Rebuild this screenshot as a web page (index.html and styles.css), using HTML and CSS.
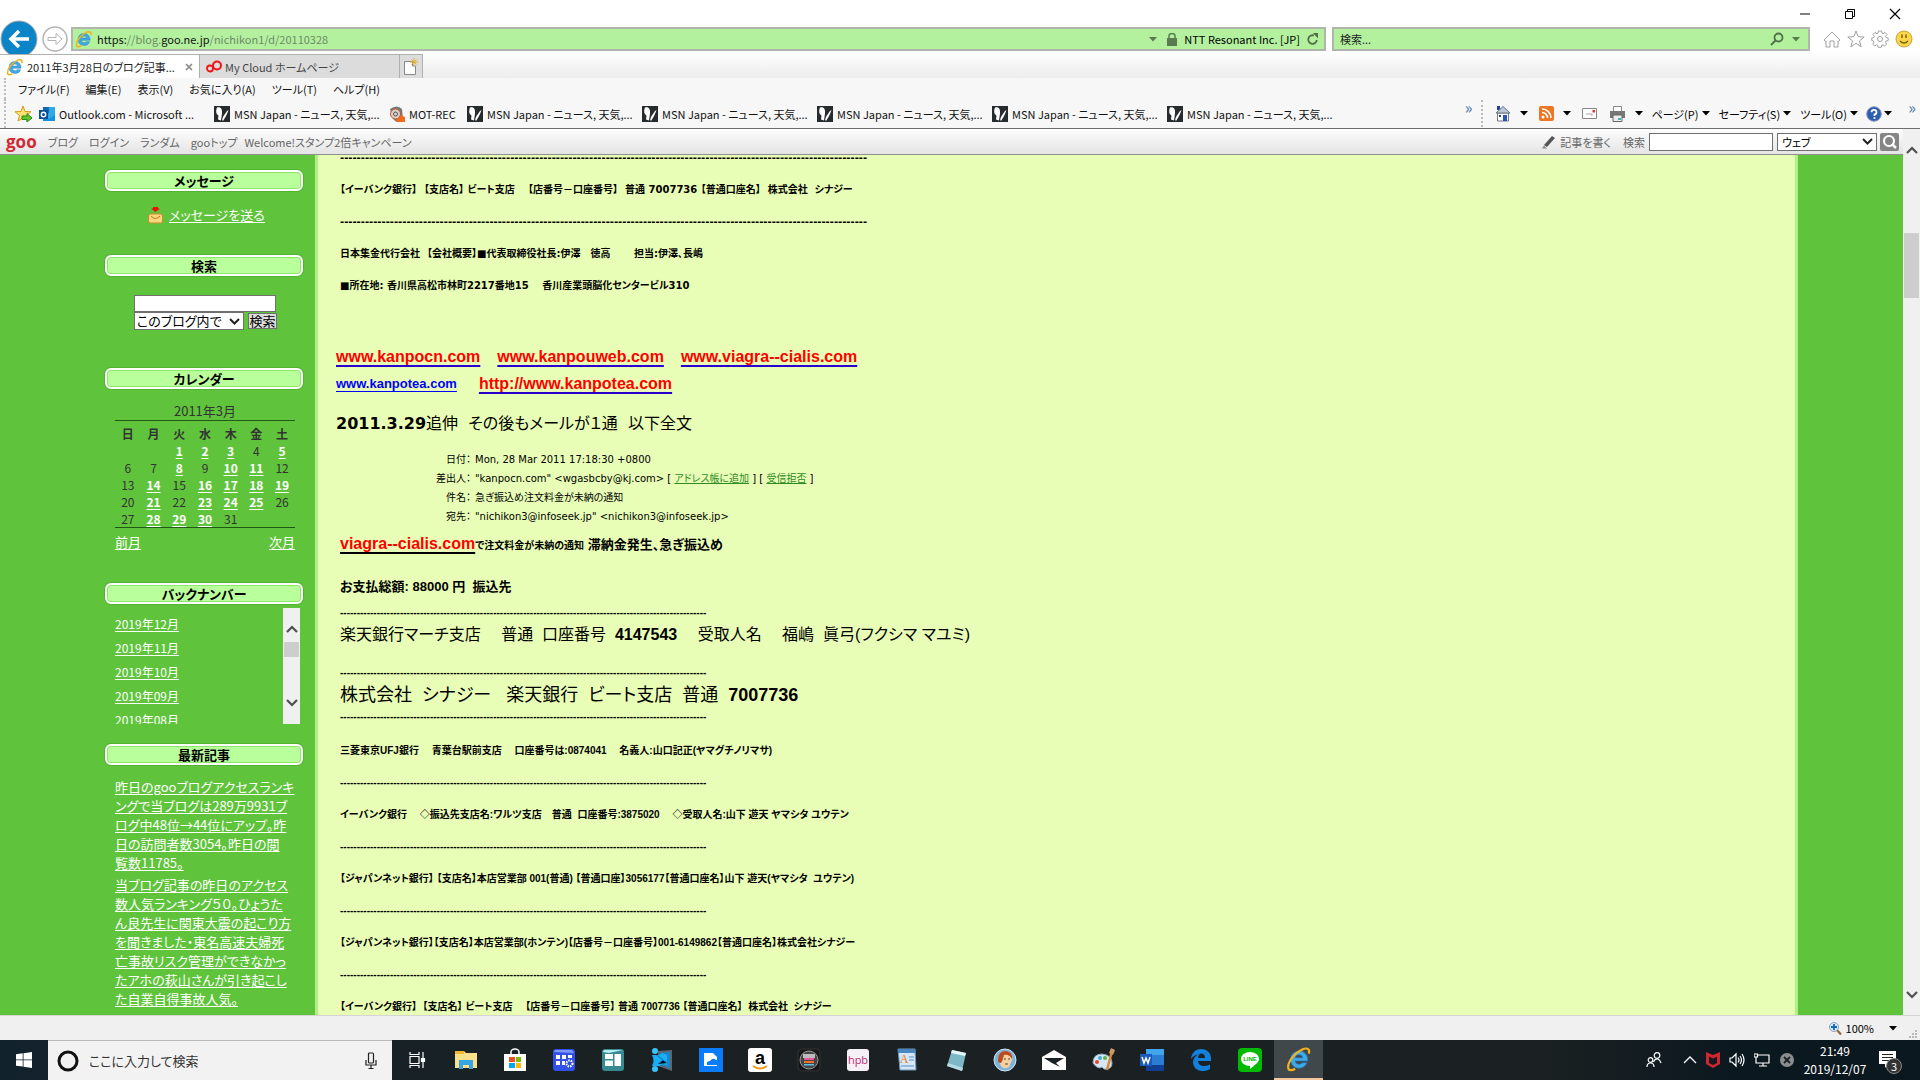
FILE: index.html
```html
<!DOCTYPE html>
<html lang="ja">
<head>
<meta charset="utf-8">
<title>2011年3月28日のブログ記事一覧</title>
<link rel="stylesheet" href="styles.css">
</head>
<body>
<svg width="0" height="0" class="defs" aria-hidden="true">
  <symbol id="ie" viewBox="0 0 24 24">
    <path d="M12 4.500a8 8 0 1 0 7.500 11h-4.700a3.600 3.600 0 0 1-6.400-1.700H20A8 8 0 0 0 12 4.500zM8.500 10.800a3.600 3.600 0 0 1 7 0z" fill="#3fa9e6" fill-rule="evenodd" stroke="#1b74ba" stroke-width=".5"/>
    <path d="M21 7c1.500-4.500-1.500-6-6.500-3.500C8 6.500 2 14 2 19.500c0 4 4 3 6.500 1.500" fill="none" stroke="#f2b21c" stroke-width="2"/>
  </symbol>
  <symbol id="msn" viewBox="0 0 16 16"><path d="M0 0h16v16H0z" fill="#262b2e"/><path d="M3 1.500c4-1 5.500 2 5 6l-1 7-3-1 .5-4C1.500 8 2 4 3 1.500zM14.500 4c-1 3-2 5-3 7l-2.500 4c-1.500-1-.5-3 .5-5l3.500-5z" fill="#fff"/></symbol>
  <symbol id="caret" viewBox="0 0 8 5"><path d="M0 0h8L4 4.500z" fill="currentColor"/></symbol>
  <symbol id="up" viewBox="0 0 12 8"><path d="M1 7l5-5 5 5" fill="none" stroke="#505050" stroke-width="2.200"/></symbol>
  <symbol id="down" viewBox="0 0 12 8"><path d="M1 1l5 5 5-5" fill="none" stroke="#505050" stroke-width="2.200"/></symbol>
</svg>

<header class="chrome">
  <div class="titlebar">
    <button class="win" aria-label="最小化"><svg width="12" height="12"><path d="M1 6h10" stroke="#000"/></svg></button>
    <button class="win" aria-label="元に戻す"><svg width="12" height="12" fill="none" stroke="#000"><path d="M1.500 3.500h7v7h-7zM3.500 3V1.500h7v7H9"/></svg></button>
    <button class="win" aria-label="閉じる"><svg width="12" height="12"><path d="M1 1l10 10M11 1L1 11" stroke="#000" stroke-width="1.200"/></svg></button>
  </div>
  <div class="navbar">
    <button class="back" aria-label="戻る"><svg width="38" height="38" viewBox="0 0 38 38"><circle cx="19" cy="19" r="18" fill="#0b84c8" stroke="#a9a9a9"/><path d="M29 19H12M19 11l-8 8 8 8" fill="none" stroke="#fff" stroke-width="3.500"/></svg></button>
    <button class="fwd" aria-label="進む"><svg width="28" height="28" viewBox="0 0 28 28" fill="#fff" stroke="#b4b4b4"><circle cx="14" cy="14" r="12" stroke-width="1.500"/><path d="M7 12.500h8V8.500l6 5.500-6 5.500v-4H7z"/></svg></button>
    <div class="address">
      <svg width="18" height="18"><use href="#ie"/></svg>
      <span class="url"><b>https:</b>//blog.<b>goo.ne.jp</b>/nichikon1/d/20110328</span>
      <svg class="dim" width="8" height="5"><use href="#caret"/></svg>
      <svg class="lock" width="10" height="13" viewBox="0 0 10 13"><path d="M0 5h10v8H0z" fill="#5a7a50"/><path d="M2 6V3a3 2.500 0 0 1 6 0v3" fill="none" stroke="#5a7a50" stroke-width="1.500"/></svg>
      <span>NTT Resonant Inc. [JP]</span>
      <svg class="reload" width="13" height="13" viewBox="0 0 13 13"><path d="M8 2.500A4.300 4.300 0 1 0 10.800 7" fill="none" stroke="#4f6d46" stroke-width="1.800"/><path d="M7 0h5v5.500z" fill="#4f6d46"/></svg>
    </div>
    <div class="websearch">
      <input type="text" aria-label="検索" placeholder="検索...">
      <svg width="14" height="14" viewBox="0 0 14 14" fill="none" stroke="#4f7146" stroke-width="1.800"><circle cx="8.500" cy="5.500" r="4"/><path d="M5.500 8.500L1 13"/></svg>
      <svg class="dim" width="8" height="5"><use href="#caret"/></svg>
    </div>
    <div class="tools">
      <svg width="18" height="18" viewBox="0 0 18 18" fill="none" stroke="#a0a0a0"><path d="M1 10l8-8 8 8-1.500 1.500L15 11v6h-4v-6H7v6H3v-6l-.5.500z"/></svg>
      <svg width="18" height="18" viewBox="0 0 18 18" fill="none" stroke="#a0a0a0"><path d="M9 1l2.200 5.800 6 .2-4.700 3.800 1.700 6L9 13.300 3.800 16.800l1.700-6L.8 7l6-.2z"/></svg>
      <svg width="18" height="18" viewBox="0 0 18 18" fill="none" stroke="#a0a0a0"><circle cx="9" cy="9" r="2.500"/><path d="M7.500 1h3l.5 2.200 1.200.5L14 2.500 16 4.500 14.500 6.300l.5 1.200 2.200.5v2.500l-2.200.5-.5 1.200 1.200 1.800-2 2-1.800-1.200-1.200.5-.5 2h-3l-.5-2-1.200-.5L3.700 16l-2-2 1.300-1.800-.5-1.200L.8 10.500V8l2-.5.500-1.200L2 4.500l2-2 1.800 1.200L7 3.200z"/></svg>
      <svg width="18" height="18" viewBox="0 0 18 18"><circle cx="9" cy="9" r="8" fill="#fbd648" stroke="#c9a73a"/><path d="M7 4.500v3.500M11 4.500v3.500M5 11q4 4 8 0" stroke="#7d6114" stroke-width="1.500" fill="none"/></svg>
    </div>
  </div>
  <div class="tabs">
    <div class="tab active"><svg width="18" height="18"><use href="#ie"/></svg><span>2011年3月28日のブログ記事...</span><button aria-label="タブを閉じる"><svg width="8" height="8"><path d="M1 1l6 6M7 1L1 7" stroke="#888" stroke-width="1.600"/></svg></button></div>
    <div class="tab"><svg width="16" height="16" viewBox="0 0 16 16" fill="none" stroke="#f01414"><circle cx="4" cy="9.500" r="3" stroke-width="1.800"/><circle cx="11" cy="6.500" r="4" stroke-width="2"/></svg><span>My Cloud ホームページ</span></div>
    <button class="newtab" aria-label="新しいタブ"><svg width="16" height="18" viewBox="0 0 16 18"><path d="M1.500 3.500h8V8h3v8.500h-11z" fill="#fff" stroke="#888"/><path d="M11 0v8M7 4h8M8.500 1.500l5 5M13.500 1.500l-5 5" stroke="#e0b030"/></svg></button>
  </div>
  <div class="bars">
    <nav class="menu"><a href="#">ファイル(F)</a><a href="#">編集(E)</a><a href="#">表示(V)</a><a href="#">お気に入り(A)</a><a href="#">ツール(T)</a><a href="#">ヘルプ(H)</a></nav>
    <div class="favs">
      <svg class="addfav" width="18" height="18" viewBox="0 0 18 18"><path d="M8 1l2 5.500 6 .2-4.500 3.800 1.500 5.500-5-3.200L3 16l1.500-5.500L0 6.700l6-.2z" fill="#fde271" stroke="#d99a1c"/><path d="M7 11h5V8.500L17 13l-5 4v-2.500H7z" fill="#5cc42c" stroke="#2d8a12"/></svg>
      <a class="fav" href="#"><svg width="16" height="16" viewBox="0 0 16 16"><path d="M4 1h12v14H4z" fill="#32a9e7"/><path d="M4 1h6v6H4z" fill="#0f6cbd"/><path d="M4 9l6 4 6-4v6H4z" fill="#1490df"/><path d="M0 4h9v9H0z" fill="#0a4f9a"/><circle cx="4.500" cy="8.500" r="2.200" fill="none" stroke="#fff" stroke-width="1.400"/></svg>Outlook.com - Microsoft ...</a>
      <a class="fav" href="#"><svg width="16" height="16"><use href="#msn"/></svg>MSN Japan - ニュース, 天気,...</a>
      <a class="fav short" href="#"><svg width="16" height="16" viewBox="0 0 16 16"><path d="M1 3q7-5 12 0l1 10-6 3q-4-2-5-6z" fill="#777"/><path d="M8 8l8 3v5H7z" fill="#f26b1d"/><circle cx="6.500" cy="8" r="5" fill="#d9d0cc" stroke="#c85a24"/><circle cx="6.500" cy="8" r="2" fill="none" stroke="#555"/></svg>MOT-REC</a>
      <a class="fav" href="#"><svg width="16" height="16"><use href="#msn"/></svg>MSN Japan - ニュース, 天気,...</a>
      <a class="fav" href="#"><svg width="16" height="16"><use href="#msn"/></svg>MSN Japan - ニュース, 天気,...</a>
      <a class="fav" href="#"><svg width="16" height="16"><use href="#msn"/></svg>MSN Japan - ニュース, 天気,...</a>
      <a class="fav" href="#"><svg width="16" height="16"><use href="#msn"/></svg>MSN Japan - ニュース, 天気,...</a>
      <a class="fav" href="#"><svg width="16" height="16"><use href="#msn"/></svg>MSN Japan - ニュース, 天気,...</a>
      <span class="more">»</span>
      <div class="cmds">
        <button aria-label="ホーム"><svg width="16" height="17" viewBox="0 0 16 17"><path d="M2 1h3v4H2z" fill="#23409c"/><path d="M2.500 8h11v8h-11z" fill="#fbfbfb" stroke="#777"/><path d="M8 1.500l7 6.500H1z" fill="#bcc6d4" stroke="#67778e"/><path d="M8 10h4v6H8z" fill="#2c52b5"/><path d="M4 10h2v2H4z" fill="#444455"/></svg></button><svg width="8" height="5"><use href="#caret"/></svg>
        <button aria-label="フィード"><svg width="15" height="15" viewBox="0 0 15 15"><rect width="15" height="15" rx="2" fill="#ef7625"/><circle cx="4" cy="11" r="1.500" fill="#fff"/><path d="M3 6.500a5.500 5.500 0 0 1 5.500 5.500M3 3a9 9 0 0 1 9 9" fill="none" stroke="#fff" stroke-width="1.600"/></svg></button><svg width="8" height="5"><use href="#caret"/></svg>
        <button class="mail" aria-label="メール"><svg width="15" height="11" viewBox="0 0 15 11"><path d="M.5.500h14v10H.5z" fill="#fff" stroke="#888"/><path d="M10.500 2h2.500v2.500h-2.500z" fill="#d33"/><path d="M4 6h6v2" fill="none" stroke="#aaa"/></svg></button>
        <button class="print" aria-label="印刷"><svg width="17" height="16" viewBox="0 0 17 16"><path d="M4.500.500h8V6h-8z" fill="#fff" stroke="#888"/><path d="M1 5h15v7H1z" fill="#777"/><path d="M4 9h9v6.500H4z" fill="#eee" stroke="#666"/><path d="M9 12h3v2H9z" fill="#3fb3b8"/></svg></button><svg width="8" height="5"><use href="#caret"/></svg>
        <button class="txt">ページ(P)</button><svg width="8" height="5"><use href="#caret"/></svg>
        <button class="txt">セーフティ(S)</button><svg width="8" height="5"><use href="#caret"/></svg>
        <button class="txt">ツール(O)</button><svg width="8" height="5"><use href="#caret"/></svg>
        <button class="help" aria-label="ヘルプ"><svg width="16" height="16" viewBox="0 0 16 16"><circle cx="8" cy="8" r="7.300" fill="#2b5db5" stroke="#8d9bb5"/><path d="M5.500 6.300A2.500 2.300 0 1 1 8.500 8.500V10M8.500 11.300v1.700" fill="none" stroke="#fff" stroke-width="1.800"/></svg></button><svg width="8" height="5"><use href="#caret"/></svg>
        <span class="more last">»</span>
      </div>
    </div>
  </div>
</header>

<div class="viewport">
  <div class="page">
    <div class="goobar">
      <a class="goo" href="#">goo</a>
      <a href="#">ブログ</a><a href="#">ログイン</a><a href="#">ランダム</a><a class="tight" href="#">gooトップ</a><a href="#">Welcome!スタンプ2倍キャンペーン</a>
      <form class="goosearch">
        <svg width="14" height="14" viewBox="0 0 14 14"><path d="M2 10l8-9 3 2-8 9z" fill="#555"/><path d="M0 13.500h5l-3-3z" fill="#888"/></svg>
        <a href="#">記事を書く</a>
        <label for="gq">検索</label>
        <input id="gq" type="text">
        <select aria-label="検索対象"><option>ウェブ</option></select>
        <button type="button" aria-label="検索する"><svg width="19" height="18" viewBox="0 0 19 18"><rect width="19" height="18" rx="2" fill="#858585"/><circle cx="9" cy="8" r="5" fill="none" stroke="#fff" stroke-width="2.200"/><path d="M12 11l4 4" stroke="#fff" stroke-width="2.500"/></svg></button>
      </form>
    </div>
    <div class="columns">
      <aside class="side">
        <h3>メッセージ</h3>
        <p class="msg"><svg width="15" height="18" viewBox="0 0 15 18"><path d="M5 1h5v1.500h2L7.500 6 3 2.500h2z" fill="#e81208"/><rect x=".5" y="8" width="14" height="9" rx="2" fill="#fbd67c" stroke="#d18d2b"/><path d="M3 10q4.500 5 9 0" fill="none" stroke="#b9781f"/></svg><a href="#">メッセージを送る</a></p>
        <h3>検索</h3>
        <form class="blogsearch">
          <input type="text" aria-label="検索語">
          <div><select aria-label="検索範囲"><option>このブログ内で</option></select><button type="button">検索</button></div>
        </form>
        <h3>カレンダー</h3>
        <table class="cal">
          <caption>2011年3月</caption>
          <thead><tr><th>日</th><th>月</th><th>火</th><th>水</th><th>木</th><th>金</th><th>土</th></tr></thead>
          <tbody>
            <tr><td></td><td></td><td><a href="#">1</a></td><td><a href="#">2</a></td><td><a href="#">3</a></td><td>4</td><td><a href="#">5</a></td></tr>
            <tr><td>6</td><td>7</td><td><a href="#">8</a></td><td>9</td><td><a href="#">10</a></td><td><a href="#">11</a></td><td>12</td></tr>
            <tr><td>13</td><td><a href="#">14</a></td><td>15</td><td><a href="#">16</a></td><td><a href="#">17</a></td><td><a href="#">18</a></td><td><a href="#">19</a></td></tr>
            <tr><td>20</td><td><a href="#">21</a></td><td>22</td><td><a href="#">23</a></td><td><a href="#">24</a></td><td><a href="#">25</a></td><td>26</td></tr>
            <tr><td>27</td><td><a href="#">28</a></td><td><a href="#">29</a></td><td><a href="#">30</a></td><td>31</td><td></td><td></td></tr>
          </tbody>
        </table>
        <div class="calnav"><a href="#">前月</a><a href="#">次月</a></div>
        <h3>バックナンバー</h3>
        <div class="backnum">
          <ul><li><a href="#">2019年12月</a></li><li><a href="#">2019年11月</a></li><li><a href="#">2019年10月</a></li><li><a href="#">2019年09月</a></li><li><a href="#">2019年08月</a></li></ul>
          <div class="minibar"><svg width="12" height="8"><use href="#up"/></svg><i></i><svg class="end" width="12" height="8"><use href="#down"/></svg></div>
        </div>
        <h3>最新記事</h3>
        <ul class="recent">
          <li><a href="#">昨日のgooブログアクセスランキ<br>ングで当ブログは289万9931ブ<br>ログ中48位→44位にアップ。昨<br>日の訪問者数3054。昨日の閲<br>覧数11785。</a></li>
          <li><a href="#">当ブログ記事の昨日のアクセス<br>数人気ランキング５０。ひょうた<br>ん良先生に関東大震の起こり方<br>を聞きました・東名高速夫婦死<br>亡事故リスク管理ができなかっ<br>たアホの萩山さんが引き起こし<br>た自業自得事故人気。</a></li>
        </ul>
      </aside>
      <main class="post">
        <div class="upper">
          <p>-------------------------------------------------------------------------------------------------------------------------------</p>
          <p>【イーバンク銀行】  【支店名】 ビート支店　 【店番号－口座番号】  普通 7007736 【普通口座名】  株式会社  シナジー</p>
          <p>-------------------------------------------------------------------------------------------------------------------------------</p>
          <p>日本集金代行会社  【会社概要】■代表取締役社長:伊澤　徳高　　 担当:伊澤、長嶋</p>
          <p>■所在地: 香川県高松市林町2217番地15　 香川産業頭脳化センタービル310</p>
        </div>
        <div class="links">
          <p><a href="#">www.kanpocn.com</a><a href="#">www.kanpouweb.com</a><a href="#">www.viagra--cialis.com</a></p>
          <p><a class="blue" href="#">www.kanpotea.com</a><a href="#">http://www.kanpotea.com</a></p>
        </div>
        <h2><b>2011.3.29</b>追伸  その後もメールが１通  以下全文</h2>
        <table class="mailhead">
          <tr><th>日付：</th><td>Mon, 28 Mar 2011 17:18:30 +0800</td></tr>
          <tr><th>差出人：</th><td>"kanpocn.com" &lt;wgasbcby@kj.com&gt; [ <a href="#">アドレス帳に追加</a> ] [ <a href="#">受信拒否</a> ]</td></tr>
          <tr><th>件名：</th><td>急ぎ振込め注文料金が未納の通知</td></tr>
          <tr><th>宛先：</th><td>"nichikon3@infoseek.jp" &lt;nichikon3@infoseek.jp&gt;</td></tr>
        </table>
        <p class="notice"><a href="#">viagra--cialis.com</a><small>で注文料金が未納の通知</small> 滞納金発生、急ぎ振込め</p>
        <p class="total">お支払総額: 88000 円  振込先</p>
        <p class="rule">--------------------------------------------------------------------------------------------------------------</p>
        <p class="acct">楽天銀行マーチ支店　 普通  口座番号  <b>4147543</b>　 受取人名　 福嶋  眞弓(フクシマ マユミ)</p>
        <p class="rule gap">--------------------------------------------------------------------------------------------------------------</p>
        <p class="acct big">株式会社  シナジー   楽天銀行  ビート支店  普通  <b>7007736</b></p>
        <p class="rule">--------------------------------------------------------------------------------------------------------------</p>
        <div class="lower">
          <p>三菱東京UFJ銀行　 青葉台駅前支店　 口座番号は:0874041　 名義人:山口記正(ヤマグチノリマサ)</p>
          <p>--------------------------------------------------------------------------------------------------------------</p>
          <p>イーバンク銀行　 ◇振込先支店名:ワルツ支店　普通  口座番号:3875020　 ◇受取人名:山下 遊天 ヤマシタ ユウテン</p>
          <p>--------------------------------------------------------------------------------------------------------------</p>
          <p>【ジャパンネット銀行】 【支店名】本店営業部 001(普通) 【普通口座】3056177【普通口座名】山下 遊天(ヤマシタ  ユウテン)</p>
          <p>--------------------------------------------------------------------------------------------------------------</p>
          <p>【ジャパンネット銀行】【支店名】本店営業部(ホンテン)【店番号－口座番号】001-6149862【普通口座名】株式会社シナジー</p>
          <p>--------------------------------------------------------------------------------------------------------------</p>
          <p>【イーバンク銀行】  【支店名】 ビート支店　 【店番号－口座番号】 普通 7007736 【普通口座名】  株式会社  シナジー</p>
        </div>
      </main>
    </div>
  </div>
  <div class="scrollbar"><svg width="12" height="8"><use href="#up"/></svg><i></i><svg class="end" width="12" height="8"><use href="#down"/></svg></div>
</div>

<div class="status">
  <svg width="13" height="13" viewBox="0 0 13 13"><path d="M7 7l5 5.500" stroke="#96693a" stroke-width="2.200"/><circle cx="5" cy="5" r="4.500" fill="#d6ecfb" stroke="#8aa0b4"/><path d="M5 2v6M2 5h6" stroke="#1464c8" stroke-width="1.800"/></svg>
  <span>100%</span>
  <svg width="8" height="5"><use href="#caret"/></svg>
  <svg class="grip" width="8" height="8" fill="#b8b8b8"><path d="M6 0h2v2H6zM3 3h2v2H3zM6 3h2v2H6zM0 6h2v2H0zM3 6h2v2H3zM6 6h2v2H6z"/></svg>
</div>

<footer class="taskbar">
  <button class="start" aria-label="スタート"><svg width="16" height="16" fill="#fff"><path d="M0 2.300l6.700-1v6.200H0zM7.500 1.200L16 0v7.500H7.500zM0 8.300h6.700v6.300L0 13.700zM7.500 8.300H16V16l-8.500-1.200z"/></svg></button>
  <div class="tasksearch">
    <svg width="22" height="22"><circle cx="11" cy="11" r="9" fill="none" stroke="#111" stroke-width="3"/></svg>
    <input type="text" aria-label="検索" placeholder="ここに入力して検索">
    <svg width="12" height="18" viewBox="0 0 12 18" fill="none" stroke="#222" stroke-width="1.200"><rect x="3.500" y="1" width="5" height="10" rx="1"/><path d="M1 8v5h10V8M6 13v4M3.500 16.500h5"/></svg>
  </div>
  <div class="apps">
    <button aria-label="タスク ビュー"><svg width="18" height="18" viewBox="0 0 18 18" fill="none" stroke="#fff" stroke-width="1.200"><path d="M2 5.500h9v7H2zM2 1v2.500h9V1M2 17v-2.500h9V17M15 1v6M15 11v6"/><path d="M13.500 7.500h3v3h-3z" fill="#fff"/></svg></button>
    <button aria-label="エクスプローラー"><svg width="24" height="22" viewBox="0 0 24 22"><path d="M1 2h9l2 2h11v15H1z" fill="#fbe08b"/><path d="M1 2h9v3H1z" fill="#f0b92c"/><path d="M5 11h14v9h-4v-4H9v4H5z" fill="#37a5e4"/></svg></button>
    <button aria-label="ストア"><svg width="24" height="24" viewBox="0 0 24 24"><path d="M8 7V4a4 3 0 0 1 8 0v3" fill="none" stroke="#fff" stroke-width="1.500"/><path d="M1 6h22v17H1z" fill="#fff"/><path d="M6 9h6v5H6z" fill="#f04e24"/><path d="M13 9h5v5h-5z" fill="#80bb07"/><path d="M6 15h6v5H6z" fill="#08a4ee"/><path d="M13 15h5v5h-5z" fill="#fdb900"/></svg></button>
    <button aria-label="設定"><svg width="24" height="24" viewBox="0 0 24 24"><rect x="1" y="1" width="22" height="22" rx="3" fill="#3151e8"/><path d="M2 4q0-2 2-2h16l2 3z" fill="#7d9afa"/><path d="M4 7h4v4H4zM10 7h4v4h-4zM16 7h4v3h-4zM4 13h4v4H4zM10 13h3v4h-3z" fill="#fff"/><circle cx="17.500" cy="15.500" r="3" fill="none" stroke="#fff" stroke-width="2" stroke-dasharray="1.500 1"/></svg></button>
    <button aria-label="ウィンドウ"><svg width="24" height="24" viewBox="0 0 24 24"><rect x="1" y="1" width="22" height="22" rx="3" fill="#368b92"/><path d="M2 4q0-2 2-2h18L8 5z" fill="#b6eeee"/><path d="M4 6h8v5H4zM4 12.500h8V18H4zM13.500 6H20v12h-6.500z" fill="#fff"/></svg></button>
    <button aria-label="ツール"><svg width="24" height="24" viewBox="0 0 24 24"><path d="M8 3l14-1v21l-14-5z" fill="#5c6670"/><path d="M10 5l10-1v16l-10-3z" fill="#1787c9"/><circle cx="5" cy="3" r="3" fill="#35c3fb"/><circle cx="5" cy="21" r="3" fill="#35c3fb"/><path d="M2 7h4q3 1 6-2l5 2v10l-5-1q-3 3-6 2H2q3-5 0-11z" fill="#19aef5"/><path d="M8 8l5 4M8 16l5-4 4 3" stroke="#0b6fc0"/></svg></button>
    <button aria-label="クラウド"><svg width="24" height="24" viewBox="0 0 24 24"><path d="M0 0h24v24H0z" fill="#0a7cf8"/><path d="M5 5h9l4 4v9H5z" fill="#fff"/><path d="M8 17q-1-4 3-4 3-4 6-1 4 0 4 5z" fill="#0a7cf8"/></svg></button>
    <button aria-label="Amazon"><svg width="24" height="24" viewBox="0 0 24 24"><rect width="24" height="24" rx="3" fill="#fff"/><text x="12" y="16" text-anchor="middle" font-family="Liberation Sans" font-weight="700" font-size="18">a</text><path d="M5 18q7 5 14 0" fill="none" stroke="#f49b1b" stroke-width="2"/></svg></button>
    <button aria-label="カメラ"><svg width="24" height="24" viewBox="0 0 24 24"><rect x="1" y="1" width="22" height="22" rx="4" fill="#161616" stroke="#333"/><circle cx="12" cy="12" r="9" fill="#444" stroke="#999"/><path d="M6 6h12v4H6z" fill="#bbb"/><path d="M7 10h10v2H7z" fill="#e6579b"/><path d="M7 13h10v2H7z" fill="#f2702c"/><path d="M7 16h10v1.500H7z" fill="#5ac1e8"/></svg></button>
    <button aria-label="ホームページ・ビルダー"><svg width="24" height="24" viewBox="0 0 24 24"><rect x="1" y="1" width="22" height="22" rx="3" fill="#f6f1f4"/><text x="12" y="16" text-anchor="middle" font-family="Open Sans" font-size="11" fill="#c22a78">hpb</text></svg></button>
    <button aria-label="ワードパッド"><svg width="24" height="24" viewBox="0 0 24 24"><path d="M3 1h17l1 21H5z" fill="#d5e6f7" stroke="#6f94b8"/><path d="M3 1h17v4H3z" fill="#4a87c0"/><text x="9" y="15" text-anchor="middle" font-family="Liberation Serif" font-size="12" fill="#e97a20">A</text><path d="M14 9h5M14 12h5M6 18h13" stroke="#5b8fc4"/></svg></button>
    <button aria-label="メモ帳"><svg width="24" height="24" viewBox="0 0 24 24"><path d="M8 2l14 3-4 18-15-5z" fill="#7cb8c8"/><path d="M8 2l14 3-1 3L7 5z" fill="#e8f4f6"/><path d="M4 15l15 5-1 3-15-5z" fill="#b6dbe4"/></svg></button>
    <button aria-label="DVDFab"><svg width="24" height="24" viewBox="0 0 24 24"><circle cx="12" cy="12" r="11" fill="#7eb4dc" stroke="#cde4f5"/><path d="M6 13q-2-9 6-9 8 0 7 8l-3 7q-5 3-8-1z" fill="#f7cfa0"/><path d="M5 12q0-9 8-9 7 1 6 8-3-5-8-4-1 5-3 8-3 0-3-3z" fill="#bf4a1b"/><path d="M11 11h2M15 11h2M12 16h3" stroke="#554433"/></svg></button>
    <button aria-label="メール"><svg width="24" height="20" viewBox="0 0 24 20"><path d="M0 7l12-7 12 7v13H0z" fill="#fff"/><path d="M2 8h20l-8 5 4 4-8-4z" fill="#192026"/></svg></button>
    <button aria-label="ペイント"><svg width="24" height="24" viewBox="0 0 24 24"><path d="M2 15q0-9 9-9 10 1 10 9 0 7-8 6l-2-2q-4 3-9-4z" fill="#d6e6f2" stroke="#8aa8bf"/><circle cx="6" cy="14" r="2" fill="#e8462c"/><circle cx="9" cy="10" r="2" fill="#48a4e0"/><circle cx="14" cy="10" r="2" fill="#5cb544"/><path d="M21 3l-5 19" stroke="#d98a32" stroke-width="2.500"/><path d="M18 5l2-5 4 2-2 5z" fill="#c99b60"/></svg></button>
    <button aria-label="Word"><svg width="24" height="24" viewBox="0 0 24 24"><path d="M6 1h18v22H6z" fill="#2b7cd3"/><path d="M6 1h18v6H6z" fill="#41a5ee"/><path d="M6 17h18v6H6z" fill="#103f91"/><path d="M0 6h12v12H0z" fill="#185abd"/><path d="M2 9l2 6 2-5 2 5 2-6" fill="none" stroke="#fff" stroke-width="1.500"/></svg></button>
    <button aria-label="Edge"><svg width="24" height="24" viewBox="0 0 24 24"><path d="M2 11C3 4 7 1 12 1c6 0 10 4 10 9v3H9c0 3 3 5 6 5 2 0 4-.5 6-1.500V21c-2 1.500-5 2-8 2-5 0-9-4-9-9 0-3 2-6 5-7.500-4 .5-6 3-7 4.500zm7-1h7c0-3-1.500-4.500-3.500-4.500S9.500 7 9 10z" fill="#1280dc" fill-rule="evenodd"/></svg></button>
    <button aria-label="LINE"><svg width="24" height="24" viewBox="0 0 24 24"><rect width="24" height="24" rx="4" fill="#00b900"/><path d="M12 4c5 0 9 3 9 7 0 3-4 6-9 10v-3c-5 0-9-3-9-7s4-7 9-7z" fill="#fff"/><text x="12" y="13" text-anchor="middle" font-family="Liberation Sans" font-weight="700" font-size="6" fill="#00b900">LINE</text></svg></button>
    <button class="on" aria-label="Internet Explorer"><svg width="26" height="26"><use href="#ie"/></svg></button>
  </div>
  <div class="tray">
    <svg class="people" width="16" height="16" viewBox="0 0 16 16" fill="none" stroke="#fff" stroke-width="1.200"><circle cx="4.500" cy="8" r="2.300"/><path d="M1 15q0-4 3.500-4T8 15"/><circle cx="11" cy="3.500" r="2.800"/><path d="M7.500 10q1-3 3.500-3t4 4"/></svg>
    <svg width="14" height="16" fill="none" stroke="#fff" stroke-width="1.300"><path d="M1 11l6-6 6 6"/></svg>
    <svg width="14" height="16" viewBox="0 0 14 16"><path d="M0 0l7 3 7-3v12l-7 4-7-4z" fill="#cf2730"/><path d="M3 4.500l4 2 4-2V11l-4 2-4-2z" fill="#17191f"/></svg>
    <svg width="16" height="16" viewBox="0 0 16 16" fill="none" stroke="#fff" stroke-width="1.200"><path d="M1 6h2l4-4v12l-4-4H1zM9 5.500q2 2.500 0 5M11 4q3 4 0 8M13 2q4 6 0 12"/></svg>
    <svg width="16" height="16" viewBox="0 0 16 16" fill="none" stroke="#fff" stroke-width="1.200"><path d="M4 3h11v8H2V7M5 14h8M9 11v3M0 2h3.500v3H0zM2 5v3"/></svg>
    <svg width="16" height="16"><circle cx="8" cy="8" r="7" fill="#8b8e91"/><path d="M5 5l6 6M11 5l-6 6" stroke="#1b2024" stroke-width="1.800"/></svg>
    <div class="clock"><span>21:49</span><span>2019/12/07</span></div>
    <div class="notif"><svg width="18" height="18" viewBox="0 0 18 18"><path d="M0 0h17v13H9l-3 4v-4H0z" fill="#fff"/><path d="M3 3.500h11M3 6.500h11M3 9.500h7" stroke="#222"/></svg><span>3</span></div>
  </div>
</footer>
</body>
</html>
```

FILE: styles.css
```css
* { box-sizing: border-box; }
body {
  margin: 0;
  height: 100vh;
  display: flex;
  flex-direction: column;
  overflow: hidden;
  font-family: "Noto Sans CJK JP", sans-serif;
  font-feature-settings: "palt";
  font-size: 11px;
  line-height: 16px;
  color: #000;
  background: #fff;
  white-space: nowrap;
}
.defs { position: absolute; }
svg { display: block; flex: none; }
button { padding: 0; border: 0; background: none; font: inherit; font-feature-settings: inherit; color: inherit; }
input, select { font: inherit; font-feature-settings: inherit; margin: 0; border-radius: 0; min-width: 0; }
p, h2, h3, ul { margin: 0; padding: 0; }
ul { list-style: none; }

/* browser frame */
.chrome { flex: none; }
.titlebar { height: 27px; display: flex; justify-content: flex-end; align-items: center; gap: 33px; padding-right: 19px; }
.navbar { height: 24px; display: flex; align-items: center; }
.back { width: 38px; height: 38px; }
.fwd { width: 28px; margin: 0 2px 0 3px; }
.address, .websearch { height: 24px; display: flex; align-items: center; background: #b3f19f; border: 2px solid #b0b6ac; }
.address { flex: 1; padding: 0 5px 0 2px; }
.url { flex: 1; margin-left: 4px; color: #6f8a66; }
.url b { font-weight: 400; color: #111; }
.dim { color: #5a7a50; }
.lock { margin: 0 7px 0 10px; }
.reload { margin-left: 6px; }
.websearch { width: 478px; margin-left: 6px; padding: 0 8px 0 6px; gap: 8px; }
.websearch input { flex: 1; border: 0; padding: 0; background: none; }
.websearch input::placeholder { color: #222; }
.tools { display: flex; gap: 6px; padding: 0 7px 0 13px; }
.tabs { display: flex; height: 27px; padding-top: 3px; background: linear-gradient(#fff, #ececec); }
.tab { width: 200px; height: 24px; display: flex; align-items: center; gap: 3px; padding: 0 6px; background: #dcdcdc; border: 1px solid #b0b0b0; border-width: 1px 1px 0 0; color: #444; }
.tab span { flex: 1; }
.tab.active { background: #fff; color: #222; }
.newtab { width: 23px; padding-left: 3px; background: #dcdcdc; border: 1px solid #b0b0b0; border-width: 1px 1px 0 0; }
.bars { background: #f7f7f7; height: 51px; border-bottom: 1px solid #6d6d6d; padding-left: 4px; }
.menu { display: flex; gap: 16px; height: 21px; align-items: center; padding-left: 12px; border-left: 2px dotted #bbb; }
.menu a, .fav { color: #111; text-decoration: none; }
.favs { display: flex; align-items: center; height: 29px; padding-left: 9px; border-left: 2px dotted #bbb; }
.addfav { margin-right: 6px; }
.fav { width: 175px; display: flex; align-items: center; gap: 4px; }
.fav.short { width: 78px; }
.more { margin-left: auto; margin-bottom: 14px; color: #4a78ae; font-size: 16px; }
.cmds { display: flex; align-items: center; margin-left: 8px; height: 27px; padding-left: 12px; border-left: 2px dotted #bbb; }
.cmds button { margin-right: 9px; }
.cmds > svg + button { margin-left: 11px; }
.cmds .mail { margin-right: 12px; }
.cmds .print { margin-right: 9px; }
.cmds > svg + button.txt { margin-left: 9px; margin-right: 3px; }
.cmds > svg + .help { margin-left: 8px; margin-right: 2px; }
.more.last { margin-left: 12px; width: 16px; text-align: center; }

/* page area */
.viewport { flex: 1; min-height: 0; display: flex; }
.page { flex: 1; min-width: 0; display: flex; flex-direction: column; }
.goobar { flex: none; height: 26px; display: flex; align-items: center; gap: 11px; padding: 0 4px 0 6px; background: linear-gradient(#fdfdfd, #e4e4e4); border-bottom: 1px solid #909090; }
.goobar a, .goobar label { color: #666; text-decoration: none; }
.goobar .goo { font: 700 17px/20px "Open Sans", sans-serif; color: #cf2a35; }
.goobar .tight { margin-right: -4px; }
.goosearch { margin-left: auto; display: flex; align-items: center; }
.goosearch a { margin: 0 12px 0 4px; }
.goosearch input { width: 124px; height: 18px; margin: 0 4px; border: 1px solid #707070; }
.goosearch select, .blogsearch select {
  appearance: none;
  border: 1px solid #707070;
  background: #fff url("data:image/svg+xml,%3Csvg xmlns='http://www.w3.org/2000/svg' width='11' height='7'%3E%3Cpath d='M1 1l4.500 4.500L10 1' fill='none' stroke='%23222' stroke-width='2'/%3E%3C/svg%3E") no-repeat right 3px center;
}
.goosearch select { width: 100px; height: 18px; line-height: 14px; padding: 0 4px; margin-right: 3px; }
.columns { flex: 1; min-height: 0; display: grid; grid-template-columns: 315px 1fr; overflow: hidden; background: #5fc43c; padding-right: 105px; }
.side { padding: 15px 12px 0 105px; overflow: hidden; font-size: 13px; }
.side a { color: #fff; text-underline-offset: 2px; }
.side h3 { height: 21px; border: 2px solid #fff; border-radius: 6px; background: #b9ff9c; box-shadow: inset 0 0 0 1px #8be868, 0 0 0 1px #52b432; text-align: center; font-size: 13px; line-height: 17px; }
.msg { display: flex; align-items: center; gap: 6px; height: 20px; margin: 14px 0 30px 43px; }
.blogsearch { margin: 19px 0 38px 29px; }
.blogsearch input { display: block; width: 142px; height: 17px; border: 1px solid #707070; }
.blogsearch div { display: flex; gap: 4px; align-items: center; }
.blogsearch select { width: 110px; height: 18px; line-height: 16px; padding: 0 2px; }
.blogsearch button { width: 29px; height: 16px; line-height: 14px; border: 1px solid #707070; background: #ddd; }
.cal { width: 180px; margin: 13px 0 0 10px; border-collapse: collapse; table-layout: fixed; font-size: 12px; color: #333; border-bottom: 1px solid #1e5a14; }
.cal caption { height: 19px; line-height: 18px; font-size: 13px; border-bottom: 1px solid #1e5a14; }
.cal th, .cal td { padding: 0; text-align: center; line-height: 17px; height: 17px; }
.cal th { padding-top: 4px; }
.cal a { font-weight: 700; }
.calnav { display: flex; justify-content: space-between; height: 20px; margin: 4px 8px 31px 10px; line-height: 20px; }
.backnum { display: flex; justify-content: space-between; height: 116px; margin: 4px 3px 20px 10px; overflow: hidden; }
.backnum ul { padding-top: 4px; font-size: 12px; }
.backnum li { line-height: 24px; }
.minibar, .scrollbar { width: 17px; background: #f0f0f0; display: flex; flex-direction: column; align-items: center; flex: none; }
.minibar { padding: 17px 0; }
.minibar i { width: 15px; height: 15px; margin-top: 9px; background: #cdcdcd; }
.end { margin-top: auto; }
.recent { padding: 12px 0 0 10px; }
.recent li { line-height: 19px; margin-bottom: 3px; }
.scrollbar { padding: 17px 0 16px; }
.scrollbar i { width: 15px; height: 65px; margin-top: 79px; background: #cdcdcd; }

/* article, scrolled part way */
.post { background: #e8feb6; border: solid #aef083; border-width: 0 3px; padding-left: 22px; overflow: hidden; font-size: 10px; }
.upper { margin-top: -13px; font-family: "DejaVu Sans", "Noto Sans CJK JP", sans-serif; font-weight: 700; line-height: 32px; }
.links { margin: 41px 0 0 -4px; font: 700 16px/27px "Liberation Sans", sans-serif; }
.links a, .notice a { color: #f00; text-decoration: underline 2px #2a00d0; text-underline-offset: 3px; }
.links .blue { font-size: 13px; color: #00f; text-decoration: underline 1px #00f; margin-right: 5px; }
.post h2 { margin: 11px 0 10px -4px; font: 400 16px/32px "DejaVu Sans", "Noto Sans CJK JP", sans-serif; }
.post p, .post h2 { white-space: pre; font-feature-settings: "palt"; }
.post .links p { display: flex; gap: 17px; white-space: nowrap; }
.mailhead { border-collapse: collapse; font-family: "DejaVu Sans", "Noto Sans CJK JP", sans-serif; }
.mailhead th { width: 131px; padding: 0; text-align: right; font-weight: 400; line-height: 19px; }
.mailhead td { padding: 0 0 0 4px; line-height: 19px; }
.mailhead a { color: #2e8b1e; }
.notice, .total { font: 700 13px/32px "Liberation Sans", "Noto Sans CJK JP", sans-serif; }
.notice { margin-top: 2px; }
.notice a { font-size: 16px; text-decoration-color: #000; }
.notice small { font-size: 10px; }
.total { margin-top: 9px; }
.rule { margin: 4px 0; font: 700 10px/12px "Liberation Sans", sans-serif; }
.rule.gap { margin-top: 20px; }
.acct { font: 400 16px/24px "Liberation Sans", "Noto Sans CJK JP", sans-serif; }
.acct.big { font-size: 18px; }
.lower { margin-top: 12px; font: 700 10px/32px "Liberation Sans", "Noto Sans CJK JP", sans-serif; }

.status { flex: none; height: 25px; display: flex; align-items: center; justify-content: flex-end; padding-right: 3px; background: #f0f0f0; border-top: 1px solid #d5d5d5; }
.status span { margin: 0 15px 0 4px; }
.grip { margin: 12px 0 0 12px; }

/* taskbar */
.taskbar { flex: none; height: 40px; display: flex; background: linear-gradient(90deg, #12222c, #1b2122 35%, #1b2122 80%, #0c1820 90%); color: #fff; }
.start { width: 48px; display: grid; place-items: center; }
.tasksearch { width: 344px; display: flex; align-items: center; gap: 10px; padding: 0 15px 0 9px; background: #f2f2f2; border-top: 1px solid #bbb; }
.tasksearch input { flex: 1; border: 0; padding: 0; background: none; font-size: 13px; }
.tasksearch input::placeholder { color: #333; }
.apps { display: flex; }
.apps button { width: 49px; display: grid; place-items: center; }
.apps .on { background: #41484c; border-bottom: 2px solid #f5c69a; }
.tray { margin-left: auto; display: flex; align-items: center; gap: 9px; padding-right: 23px; }
.people { margin-right: 12px; }
.clock { width: 62px; display: flex; flex-direction: column; align-items: center; line-height: 18px; font-size: 12px; }
.notif { position: relative; margin-left: 4px; }
.notif span { position: absolute; left: 7px; top: 7px; width: 16px; height: 16px; border: 1px solid #888; border-radius: 8px; background: #333; font-size: 11px; line-height: 14px; text-align: center; }
```
